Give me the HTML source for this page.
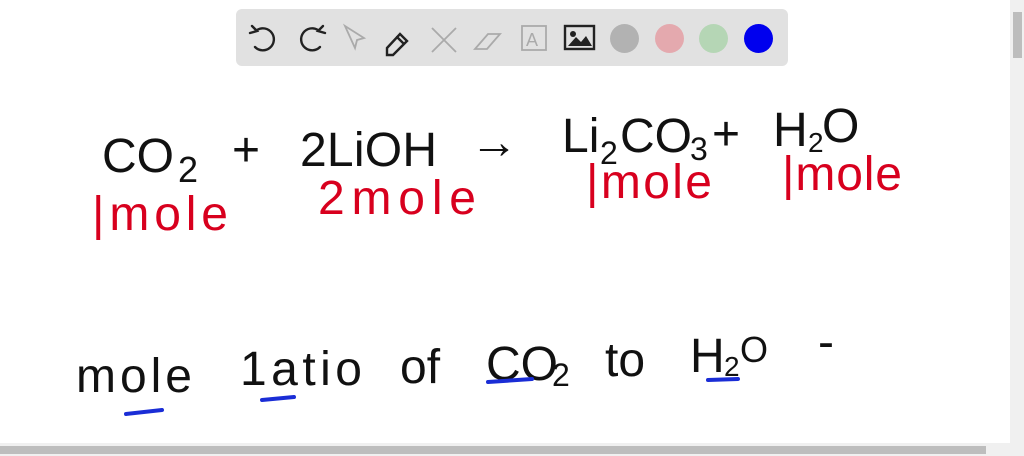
<html><head><style>
body{margin:0;width:1024px;height:456px;background:#fff;overflow:hidden;position:relative;font-family:"Liberation Sans",sans-serif}
.tb{position:absolute;left:236px;top:9px;width:552px;height:57px;background:#e1e1e1;border-radius:6px}
.c{position:absolute;top:24px;width:29px;height:29px;border-radius:50%}
</style></head><body>
<div class="tb"></div>
<svg style="position:absolute;left:0;top:0" width="1024" height="456">
<g fill="none" stroke="#222" stroke-width="2.4" stroke-linecap="round">
<path d="M257 30 A11 11 0 1 1 255 47"/><path d="M252 26 l5 5 -7 2"/>
<path d="M318 30 A11 11 0 1 0 320 47"/><path d="M323 26 l-5 5 7 2"/>
<path d="M387 48 l13 -14 l7 7 l-14 14 h-6 z M397 37 l7 7"/>
</g>
<g fill="none" stroke="#aaa" stroke-width="1.8">
<path d="M345 26 l10 22 l2 -8 l7 -2 z"/>
<path d="M432 28 l24 24 M456 28 l-24 24"/>
<path d="M475 49 l13 -15 h12 l-13 15 z"/>
<rect x="522" y="26" width="24" height="24"/>
<text x="526" y="46" font-size="18" fill="#aaa" stroke="none">A</text>
</g>
<rect x="565" y="26" width="29" height="23" fill="none" stroke="#222" stroke-width="2.4"/>
<path d="M568 46 l8 -9 l5 5 l5 -6 l6 10 z" fill="#222"/><circle cx="573" cy="34" r="3" fill="#222"/>
</svg>
<div class="c" style="left:610px;background:#b2b2b2"></div>
<div class="c" style="left:655px;background:#e4a9ae"></div>
<div class="c" style="left:699px;background:#b5d6b5"></div>
<div class="c" style="left:744px;background:#0000ee"></div>
<svg style="position:absolute;left:0;top:0" width="1024" height="456" font-family="Liberation Sans, sans-serif">
<g fill="#111" font-size="48">
<text x="102" y="172">CO</text><text x="178" y="182" font-size="36">2</text>
<text x="232" y="166">+</text>
<text x="300" y="166" textLength="137">2LiOH</text>
<text x="470" y="158">→</text>
<text x="562" y="152">Li</text><text x="600" y="164" font-size="32">2</text>
<text x="620" y="152">CO</text><text x="690" y="160" font-size="32">3</text>
<text x="712" y="150">+</text>
<text x="773" y="146">H</text><text x="808" y="152" font-size="28">2</text><text x="822" y="142">O</text>
<text x="76" y="392" textLength="116">mole</text>
<text x="240" y="385" textLength="122">1atio</text>
<text x="400" y="383">of</text>
<text x="486" y="380">CO</text><text x="552" y="386" font-size="32">2</text>
<text x="605" y="376">to</text>
<text x="690" y="372">H</text><text x="724" y="376" font-size="28">2</text><text x="740" y="362" font-size="36">O</text>
<text x="818" y="358">-</text>
</g>
<g fill="#d8001e" font-size="48">
<text x="92" y="230" textLength="136">|mole</text>
<text x="318" y="214" textLength="158">2mole</text>
<text x="586" y="198" textLength="126">|mole</text>
<text x="782" y="190" textLength="120">|mole</text>
</g>
<g stroke="#1a2dd6" stroke-width="4" stroke-linecap="round">
<path d="M126 414 l36 -4"/><path d="M262 400 l32 -3"/><path d="M488 382 l44 -3"/><path d="M708 380 l30 -1"/>
</g>
</svg>
<div style="position:absolute;left:1010px;top:0;width:14px;height:443px;background:#f0f0f0"></div>
<div style="position:absolute;left:1013px;top:12px;width:9px;height:46px;background:#bdbdbd"></div>
<div style="position:absolute;left:0;top:443px;width:1024px;height:13px;background:#f0f0f0"></div>
<div style="position:absolute;left:0;top:446px;width:986px;height:8px;background:#bdbdbd"></div>
</body></html>
